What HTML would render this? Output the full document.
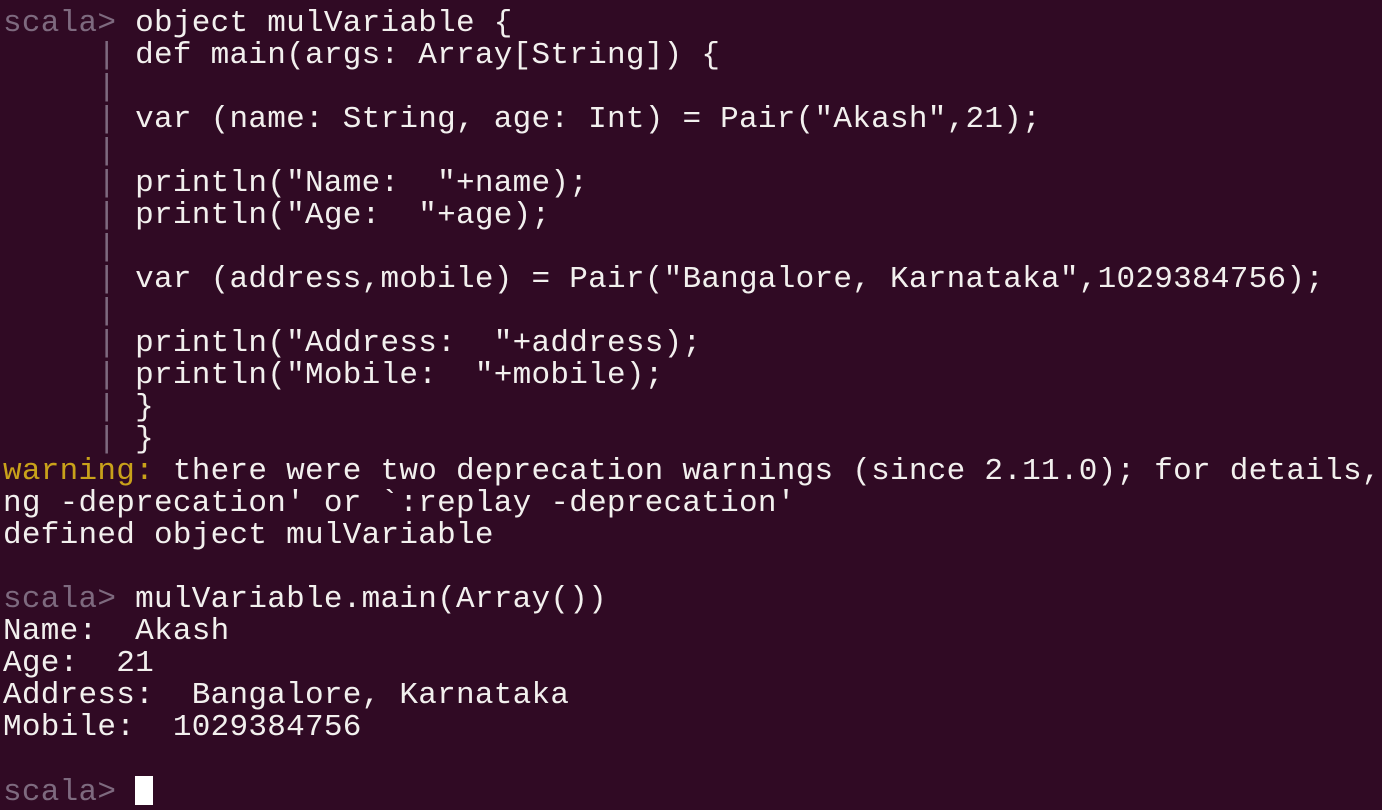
<!DOCTYPE html>
<html><head><meta charset="utf-8"><style>
html,body{margin:0;padding:0;background:#300a24;width:1382px;height:809px;overflow:hidden}
pre{margin:0;position:absolute;left:3px;top:8px;font-family:"Liberation Mono","DejaVu Sans Mono",monospace;font-size:31px;line-height:32px;color:#f2f0ee;letter-spacing:0.27px;white-space:pre}
.p{color:#7e6a7f}
.w{color:#c9a21a}
.b{color:#7e6a7f}
.c{display:inline-block;width:18px;height:29px;background:#fff;vertical-align:-5px}
</style></head><body><pre><span class="p">scala&gt;</span> object mulVariable {
     <span class="b">|</span> def main(args: Array[String]) {
     <span class="b">|</span>
     <span class="b">|</span> var (name: String, age: Int) = Pair("Akash",21);
     <span class="b">|</span>
     <span class="b">|</span> println("Name:  "+name);
     <span class="b">|</span> println("Age:  "+age);
     <span class="b">|</span>
     <span class="b">|</span> var (address,mobile) = Pair("Bangalore, Karnataka",1029384756);
     <span class="b">|</span>
     <span class="b">|</span> println("Address:  "+address);
     <span class="b">|</span> println("Mobile:  "+mobile);
     <span class="b">|</span> }
     <span class="b">|</span> }
<span class="w">warning:</span> there were two deprecation warnings (since 2.11.0); for details,
ng -deprecation' or `:replay -deprecation'
defined object mulVariable

<span class="p">scala&gt;</span> mulVariable.main(Array())
Name:  Akash
Age:  21
Address:  Bangalore, Karnataka
Mobile:  1029384756

<span class="p">scala&gt;</span> <span class="c"></span></pre></body></html>
